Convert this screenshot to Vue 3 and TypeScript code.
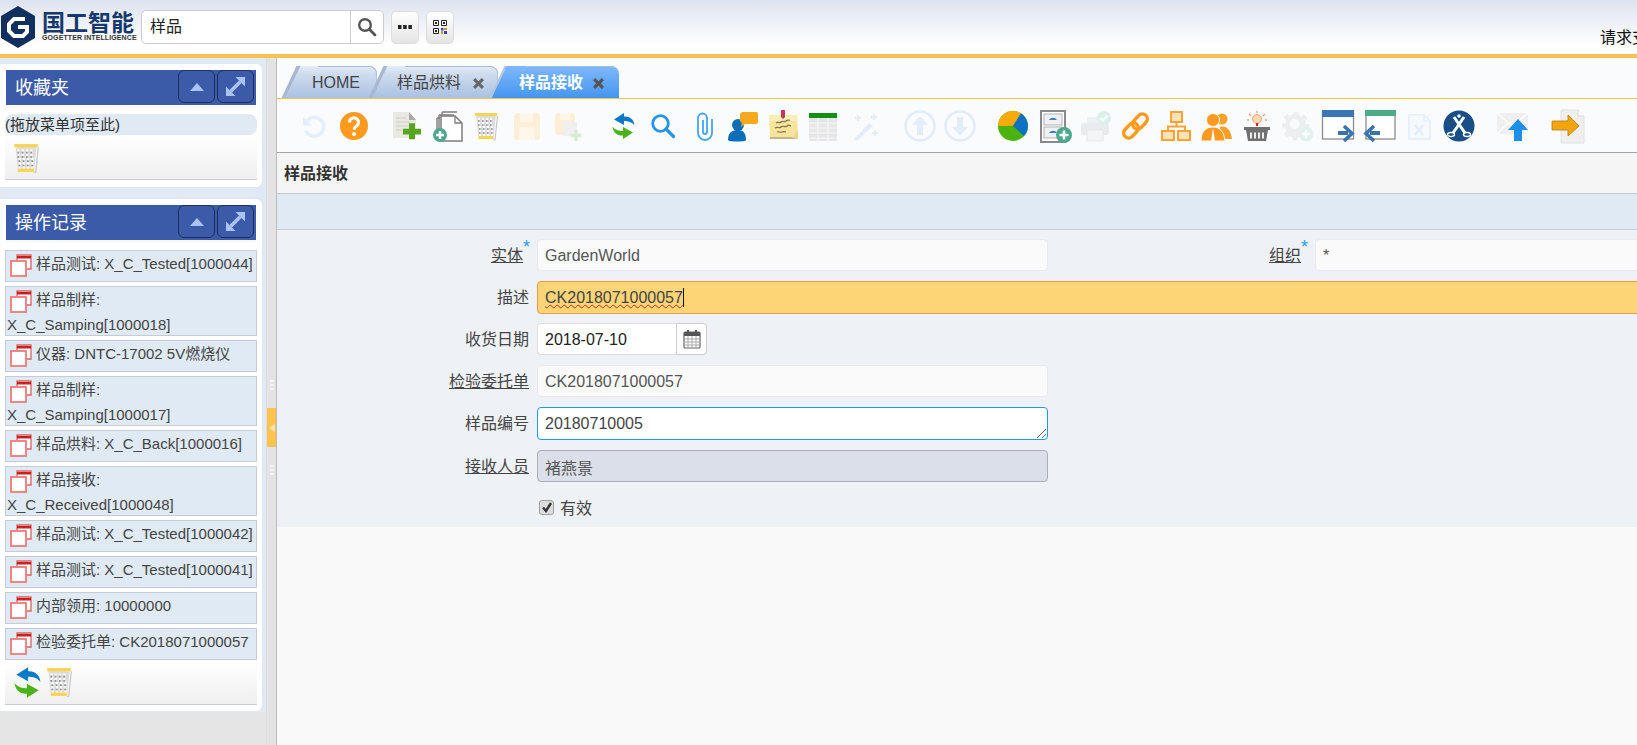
<script setup lang="ts">
const bin = `<path d="M6 4h20l-2.500 24h-15z" fill="#dcdcdc"/><g stroke="#fff" stroke-width="2" stroke-dasharray="2 2"><path d="M8 9h16M8 13h16M9 17h14M9 21h14M9 25h14" /></g><g stroke="#8f8f8f" stroke-width="1.600" stroke-dasharray="1.500 2.500"><path d="M8 11h16M8 15h16M9 19h14M9 23h14"/></g><path d="M5 3h22v3H5z" fill="#f9d44e"/><path d="M8.500 26h15v3h-15z" fill="#f9d44e"/><path d="M27.500 6l-2.500 24H23" fill="none" stroke="#c9c9c9" stroke-width="1.200"/>`;
const refresh = `<path d="M17 3L7 9.500 17 15v-4c4 0 8 1 10.500 4.500C27 9 22 6 17 6.500z" fill="#0a79c6"/><path d="M16 29l10-6.500L16 17v4c-4 0-8-1-10.500-4.500C6 23 11 26 16 25.500z" fill="#4bb31a"/>`;

const icons: { x: number; svg: string }[] = [
  { x: 313, svg: `<path d="M10 10.500a9.500 9.500 0 1 1-1.500 10" fill="none" stroke="#e3f0fc" stroke-width="3.500"/><path d="M6 6.500v9h9z" fill="#e3f0fc"/>` },
  { x: 354, svg: `<circle cx="16" cy="16" r="14" fill="#ff9a1f"/><path d="M11.500 12.500a4.500 4.500 0 1 1 7 3.600c-1.700 1.100-2.500 1.900-2.500 3.600" fill="none" stroke="#fff" stroke-width="3"/><circle cx="16" cy="24" r="2" fill="#fff"/>` },
  { x: 406, svg: `<path d="M3 2h16l7 8v18H3z" fill="#e9e9e2"/><path d="M19 2l7 8h-7z" fill="#a9a9a9"/><path d="M6 8h10M6 12h14M6 16h12M6 20h8" stroke="#cfcfc8" stroke-width="1.200"/><path d="M20 17h6v6h6v6h-6v5h-6v-5h-6v-6h6z" transform="translate(-1 -3) scale(1 .95)" fill="#5aa520"/>` },
  { x: 448, svg: `<path d="M10 2h15M7 5h15M7 5v14M10 2v3" fill="none" stroke="#7d7d7d" stroke-width="1.400"/><path d="M5 8h3M5 8v12" fill="none" stroke="#7d7d7d" stroke-width="1.400"/><path d="M9 6h14l7 7v18H9z" fill="#fff" stroke="#7d7d7d" stroke-width="1.500"/><path d="M23 6v7h7" fill="none" stroke="#7d7d7d" stroke-width="1.300"/><circle cx="8" cy="25" r="7" fill="#4ca88d"/><path d="M8 21v8M4 25h8" stroke="#fff" stroke-width="2.500"/>` },
  { x: 486, svg: bin },
  { x: 527, svg: `<rect x="3" y="3" width="26" height="27" rx="3" fill="#fdeed8"/><rect x="9" y="3" width="13" height="9" fill="#fff7ea"/><rect x="8" y="17" width="16" height="13" fill="#fff7ea"/>` },
  { x: 568, svg: `<rect x="3" y="3" width="20" height="22" rx="3" fill="#fdeed8"/><rect x="8" y="3" width="10" height="7" fill="#fff7ea"/><rect x="11" y="12" width="14" height="14" fill="#f0f0ee"/><path d="M24 20v11M18.500 25.500h11" stroke="#d7ecd0" stroke-width="3.500"/>` },
  { x: 623, svg: refresh },
  { x: 663, svg: `<circle cx="13.500" cy="13.500" r="7.800" fill="none" stroke="#2594ea" stroke-width="2.800"/><path d="M19 19l7.500 7.500" stroke="#2594ea" stroke-width="3.200" stroke-linecap="round"/>` },
  { x: 705, svg: `<path d="M23 9v14a7 7 0 0 1-14 0V8a4.500 4.500 0 0 1 9 0v14a2 2 0 0 1-4 0V10" fill="none" stroke="#45a5f0" stroke-width="1.800"/>` },
  { x: 743, svg: `<circle cx="11" cy="15" r="6" fill="#0a6fb8"/><path d="M1 30c0-8 5-10 10-10s8 3 8 10c0 2-18 2-18 0z" fill="#0a6fb8"/><path d="M15 2h14a2 2 0 0 1 2 2v8a2 2 0 0 1-2 2H18l-4 3 1-4a3 3 0 0 1-2-2V4z" fill="#f5a91c"/>` },
  { x: 783, svg: `<path d="M2 5h28l1 24H3z" fill="#f6e49a"/><path d="M2 5h28l.3 6H2z" fill="#f9edb8"/><path d="M3 27h28v2H3z" fill="#bdb592"/><path d="M31 20l-6 8 6 1z" fill="#e8d68e"/><path d="M9 13c2-2 3 1 5-1s3 1 5-1 3 0 4-1M8 18c3-2 4 1 6-1s4 1 6-1 3 0 4 0M10 22c2-1 3 1 5 0s3 0 4 0" fill="none" stroke="#7e7650" stroke-width="1.200"/><path d="M14 0h4v7l-2 2-2-2z" fill="#c0394e"/>` },
  { x: 823, svg: `<rect x="2" y="3" width="28" height="28" rx="1" fill="#e6e6e6"/><rect x="2" y="3" width="28" height="5" fill="#129014"/><path d="M2 13h28M2 18h28M2 23h28M2 28h28M11 8v23M21 8v23" stroke="#f7f7f7" stroke-width="1"/>` },
  { x: 865, svg: `<path d="M5 29L20 13l4 3L8 31z" fill="#e3eefa"/><path d="M9 5v6M6 8h6M25 4v6M22 7h6M26 20v6M23 23h6" stroke="#e3eefa" stroke-width="2.200"/>` },
  { x: 920, svg: `<circle cx="16" cy="16" r="14.500" fill="none" stroke="#e3edf8" stroke-width="2.600"/><path d="M16 6l8 9h-5v10h-6V15H8z" fill="#e3edf8"/>` },
  { x: 960, svg: `<circle cx="16" cy="16" r="14.500" fill="none" stroke="#e3edf8" stroke-width="2.600"/><path d="M16 26l8-9h-5V7h-6v10H8z" fill="#e3edf8"/>` },
  { x: 1013, svg: `<circle cx="16" cy="16" r="15" fill="#4ab30e"/><path d="M16 16L1 16A15 15 0 0 1 24 3.300z" fill="#f9aa0c"/><path d="M16 16L24 3.300A15 15 0 0 1 27 26z" fill="#0f70c4"/>` },
  { x: 1055, svg: `<rect x="2" y="1" width="24" height="31" fill="#fff" stroke="#8a8a8a" stroke-width="2"/><rect x="5" y="4" width="18" height="11" fill="#eef0f3" stroke="#b4b4b4"/><rect x="5" y="17" width="18" height="11" fill="#eef0f3" stroke="#b4b4b4"/><path d="M10 10c2-3 6-3 8 0zM10 23c2-3 6-3 8 0z" fill="#3a7fc0"/><circle cx="25" cy="25" r="8" fill="#4ca88d"/><path d="M25 20.500v9M20.500 25h9" stroke="#fff" stroke-width="2.600"/>` },
  { x: 1095, svg: `<rect x="8" y="7" width="14" height="7" fill="#eef1f3"/><rect x="2" y="13" width="28" height="12" rx="2" fill="#e8ecef"/><rect x="8" y="20" width="16" height="11" fill="#f3f5f6" stroke="#e5e8ea"/><circle cx="25" cy="8" r="7" fill="#dcefe8"/><path d="M21.500 8l2.500 2.500 4.500-5" fill="none" stroke="#fff" stroke-width="2"/>` },
  { x: 1136, svg: `<g fill="none" stroke="#ff9a1f" stroke-width="3.400"><rect x="15" y="3" width="10" height="17" rx="5" transform="rotate(42 20 11.500)"/><rect x="6" y="12" width="10" height="17" rx="5" transform="rotate(42 11 20.500)"/></g>` },
  { x: 1176, svg: `<g fill="#ffe3b8" stroke="#ffa235" stroke-width="2"><rect x="11" y="2" width="11" height="10"/><rect x="2" y="21" width="12" height="9"/><rect x="18" y="21" width="12" height="9"/></g><path d="M16.500 12v4M8 21v-4.500h17V21" fill="none" stroke="#ffa235" stroke-width="2"/>` },
  { x: 1216, svg: `<circle cx="22" cy="9" r="5.500" fill="#fda127"/><path d="M20 17c6-2 11 3 12 12H22z" fill="#fda127"/><circle cx="13" cy="10" r="6.500" fill="#ff9a1f" stroke="#fafbfd" stroke-width="1"/><path d="M1 31c0-11 6-14 12-14s11 4 12 14z" fill="#ff9a1f" stroke="#fafbfd" stroke-width="1"/><path d="M13 18l-2 13h4z" fill="#fafbfd"/>` },
  { x: 1257, svg: `<path d="M3 17h26v3H3z" fill="#707070"/><path d="M5 20h22l-2 11H7z" fill="#707070"/><path d="M10 22.500v6M14 22.500v6M18 22.500v6M22 22.500v6" stroke="#eee" stroke-width="2"/><circle cx="16" cy="9" r="4.500" fill="#ffd9b0" stroke="#f0a079"/><path d="M15 13h2v3h-2z" fill="#e02020"/><path d="M16 1v2M8 4l2 2M24 4l-2 2M6 10h2M24 10h2" stroke="#f0a079" stroke-width="1.300"/>` },
  { x: 1298, svg: `<path d="M13 1h6v4l4 2 3-3 4 5-3 3 1 4h4v6h-4l-1 4 3 3-5 4-3-3-4 2v4h-6v-4l-4-2-3 3-4-5 3-3-1-4H-1v-6h4l1-4-3-3 4-5 3 3 4-2z" transform="translate(1 1) scale(.82)" fill="#eceeef"/><circle cx="12.700" cy="14" r="5" fill="#fafbfd"/><circle cx="24" cy="24" r="7.500" fill="#e3f1ec"/><path d="M24 20v8M20 24h8" stroke="#fafbfd" stroke-width="2.300"/>` },
  { x: 1338, svg: `<rect x="0.500" y="1" width="31" height="28" fill="#fff" stroke="#8d8d8d" stroke-width="1.300"/><rect y="0" width="32" height="7" fill="#3d76b5"/><path d="M16 23h10" stroke="#3a74ae" stroke-width="4"/><path d="M22 16l8 7.500-8 7.500" fill="none" stroke="#3a74ae" stroke-width="3.600"/>` },
  { x: 1380, svg: `<rect x="2" y="1" width="29" height="28" fill="#fff" stroke="#8d8d8d" stroke-width="1.300"/><rect x="1" y="0" width="31" height="6" fill="#4fab86"/><path d="M6 23h10" stroke="#3a74ae" stroke-width="4"/><path d="M10 16l-8 7.500 8 7.500" fill="none" stroke="#3a74ae" stroke-width="3.600"/>` },
  { x: 1419, svg: `<path d="M6 5h15l6 6v18H6z" fill="#f6fafe" stroke="#e6f1fb" stroke-width="2"/><path d="M21 5v6h6" fill="none" stroke="#e6f1fb" stroke-width="1.500"/><path d="M12 15l8 10M20 15l-8 10" stroke="#dcebf8" stroke-width="2"/>` },
  { x: 1459, svg: `<circle cx="16" cy="16" r="15.500" fill="#1a4f85"/><path d="M11 7l11 16M21 7L10 23" stroke="#fff" stroke-width="3"/><circle cx="16" cy="6" r="1.800" fill="#fff"/><ellipse cx="8" cy="24.500" rx="3.500" ry="2" fill="none" stroke="#fff" stroke-width="1.400"/><ellipse cx="24" cy="24.500" rx="3.500" ry="2" fill="none" stroke="#fff" stroke-width="1.400"/>` },
  { x: 1513, svg: `<rect y="3" width="31" height="21" fill="#efefef"/><path d="M0 3l15.500 13L31 3M0 24l11-11M31 24L20 13" fill="none" stroke="#fff" stroke-width="1.500"/><path d="M21 9l10 11h-6v11h-8V20h-6z" fill="#1d8fe6"/>` },
  { x: 1568, svg: `<path d="M9 0h17l6 6v27H9z" fill="#efefef" stroke="#e2e2e2"/><path d="M26 0v6h6" fill="#fff" stroke="#dcdcdc"/><path d="M0 12h16V6l11 11-11 10v-6H0z" fill="#f3a40f" stroke="#b57d0a" stroke-width=".8" transform="translate(0 -1)"/>` },
];
const toolbar = icons.map((icon, i) => ({
  ...icon,
  gap: i === 0 ? 0 : icon.x - icons[i - 1].x - 32,
}));

const records = [
  '样品测试: X_C_Tested[1000044]',
  '样品制样: X_C_Samping[1000018]',
  '仪器: DNTC-17002 5V燃烧仪',
  '样品制样: X_C_Samping[1000017]',
  '样品烘料: X_C_Back[1000016]',
  '样品接收: X_C_Received[1000048]',
  '样品测试: X_C_Tested[1000042]',
  '样品测试: X_C_Tested[1000041]',
  '内部领用: 10000000',
  '检验委托单: CK2018071000057',
];
</script>

<template>
  <div class="page">
    <header class="topbar">
      <svg class="hex" viewBox="0 0 36 44">
        <path d="M18 1L35 11v22L18 43 1 33V11z" fill="#12305e"/>
        <path d="M25 14H14l-5 5v7l5 5h9l4-4v-5H18" fill="none" stroke="#fff" stroke-width="4"/>
      </svg>
      <div class="brand">
        <div class="brand-cn">国工智能</div>
        <div class="brand-en">GOGETTER INTELLIGENCE</div>
      </div>
      <div class="search">
        <div class="search-text">样品</div>
        <div class="search-btn">
          <svg viewBox="0 0 20 20" width="20" height="20">
            <circle cx="8" cy="8" r="5.800" fill="none" stroke="#555" stroke-width="2.400"/>
            <path d="M12.500 12.500l5.500 5.500" stroke="#555" stroke-width="2.800" stroke-linecap="round"/>
          </svg>
        </div>
      </div>
      <div class="top-btn">
        <svg viewBox="0 0 14 4" width="14" height="4"><path d="M0 0h3.500v4H0zM5.200 0h3.500v4H5.200zM10.400 0h3.500v4h-3.500z" fill="#222"/></svg>
      </div>
      <div class="top-btn">
        <svg viewBox="0 0 14 14" width="14" height="14">
          <path d="M.5.500h5v5h-5zM8.500.500h5v5h-5zM.5 8.500h5v5h-5z" fill="none" stroke="#222"/>
          <path d="M2 2h2v2H2zM10 2h2v2h-2zM2 10h2v2H2z" fill="#222"/>
          <path d="M8 8h2.500v2.500H8zM11 11h3v3h-3z" fill="#3a3ac0"/><path d="M11 8h3v2h-3zM8 11h2v3H8z" fill="#c8a020"/>
        </svg>
      </div>
      <div class="request">请求支</div>
    </header>

    <div class="body">
      <aside class="sidebar">
        <div class="side-inner">
          <section class="panel">
            <div class="panel-head">
              <span class="panel-title">收藏夹</span>
              <span class="head-btn"><svg viewBox="0 0 16 10" width="16" height="10"><path d="M8 1l7 8H1z" fill="#a9c3f2"/></svg></span>
              <span class="head-btn"><svg viewBox="0 0 22 22" width="21" height="21"><path d="M11 1h10v10zM1 11v10h10z" fill="#a9c3f2"/><path d="M16 6L6 16" stroke="#a9c3f2" stroke-width="4"/></svg></span>
            </div>
            <div class="drop">(拖放菜单项至此)</div>
            <div class="panel-foot">
              <svg class="foot-icon" viewBox="4 2 24 28" v-html="bin"></svg>
            </div>
          </section>

          <section class="panel panel-log">
            <div class="panel-head">
              <span class="panel-title">操作记录</span>
              <span class="head-btn"><svg viewBox="0 0 16 10" width="16" height="10"><path d="M8 1l7 8H1z" fill="#a9c3f2"/></svg></span>
              <span class="head-btn"><svg viewBox="0 0 22 22" width="21" height="21"><path d="M11 1h10v10zM1 11v10h10z" fill="#a9c3f2"/><path d="M16 6L6 16" stroke="#a9c3f2" stroke-width="4"/></svg></span>
            </div>
            <div class="records">
              <div v-for="r in records" :key="r" class="record">
                <svg class="rec-icon" viewBox="0 -3 22 28">
                  <path d="M7 6.500V1h14v14h-5" fill="#fff" stroke="#e06060" stroke-width="1.300"/>
                  <path d="M7 2h14v2.500H7z" fill="#c82020"/>
                  <rect x="1" y="7" width="15" height="15" fill="#fff" stroke="#ee7a7a" stroke-width="1.800"/>
                </svg>{{ r }}
              </div>
            </div>
            <div class="panel-foot foot-log">
              <svg class="foot-refresh" viewBox="5 2 23 28" v-html="refresh"></svg>
              <svg class="foot-icon foot-bin" viewBox="4 2 24 28" v-html="bin"></svg>
            </div>
          </section>
        </div>
      </aside>

      <div class="splitter">
        <span class="grip"></span>
        <span class="handle">
          <svg viewBox="0 0 6 8" width="6" height="8"><path d="M6 0v8L0 4z" fill="#f3e3c4"/></svg>
        </span>
        <span class="grip"></span>
      </div>

      <main class="content">
        <nav class="tabs">
          <div class="tab tab-home">HOME</div>
          <div class="tab tab-two">
            样品烘料
            <svg class="close" viewBox="0 0 10 10"><path d="M1 1l8 8M9 1l-8 8" stroke="#666" stroke-width="2.800"/></svg>
          </div>
          <div class="tab tab-active">
            样品接收
            <svg class="close" viewBox="0 0 10 10"><path d="M1 1l8 8M9 1l-8 8" stroke="#555" stroke-width="2.800"/></svg>
          </div>
        </nav>

        <div class="toolbar">
          <svg
            v-for="t in toolbar"
            :key="t.x"
            class="tool"
            viewBox="0 0 32 32"
            :style="{ marginLeft: t.gap + 'px' }"
            v-html="t.svg"
          ></svg>
        </div>

        <div class="title">样品接收</div>
        <div class="band"></div>

        <form class="form" @submit.prevent>
          <div class="label"><span class="link">实体</span><sup class="star">*</sup></div>
          <div class="field readonly">GardenWorld</div>
          <div class="label"><span class="link">组织</span><sup class="star">*</sup></div>
          <div class="field readonly">*</div>

          <div class="label">描述</div>
          <div class="field focused wide"><span class="squiggle">CK2018071000057</span><span class="caret"></span></div>

          <div class="label">收货日期</div>
          <div class="date">
            <div class="field date-input">2018-07-10</div>
            <div class="date-btn">
              <svg viewBox="0 0 18 20" width="18" height="20">
                <rect x="1" y="3" width="16" height="16" rx="1" fill="#fff" stroke="#666" stroke-width="1.200"/>
                <rect x="1" y="3" width="16" height="4" fill="#555"/>
                <path d="M5 1v4M13 1v4" stroke="#555" stroke-width="2"/>
                <path d="M1 10h16M1 13h16M1 16h16M5 7v12M9 7v12M13 7v12" stroke="#999" stroke-width=".8"/>
              </svg>
            </div>
          </div>

          <div class="label"><span class="link">检验委托单</span></div>
          <div class="field readonly">CK2018071000057</div>

          <div class="label">样品编号</div>
          <div class="field active">
            20180710005
            <svg class="grab" viewBox="0 0 9 9" width="9" height="9"><path d="M0 9l9-9M5 9l4-4" stroke="#555" stroke-width=".9"/></svg>
          </div>

          <div class="label label-down"><span class="link">接收人员</span></div>
          <div class="field disabled">褚燕景</div>

          <div class="check-row">
            <span class="check">
              <svg viewBox="0 0 12 12" width="12" height="12"><path d="M2 6.500l3 3.500 5-8" fill="none" stroke="#333" stroke-width="2.400"/></svg>
            </span>
            <span class="check-label">有效</span>
          </div>
        </form>
        <div class="rest"></div>
      </main>
    </div>
  </div>
</template>

<style>
html,
body {
  margin: 0;
  overflow: hidden;
}
</style>

<style scoped>
.page {
  width: 1637px;
  height: 745px;
  display: flex;
  flex-direction: column;
  overflow: hidden;
  font-family: "Liberation Sans", "Noto Sans CJK SC", sans-serif;
  font-size: 16px;
  color: #333;
  background: #fff;
}
.topbar {
  flex: none;
  height: 54px;
  border-bottom: 4px solid #fac24e;
  background: linear-gradient(#dde3ee, #fff 85%);
  display: flex;
  align-items: center;
  position: relative;
}
.hex {
  flex: none;
  width: 36px;
  height: 44px;
}
.brand {
  flex: none;
  width: 92px;
  margin-left: 6px;
  margin-right: 7px;
}
.brand-cn {
  font-size: 23px;
  line-height: 22px;
  font-weight: 700;
  color: #15396f;
  white-space: nowrap;
}
.brand-en {
  font-size: 7px;
  line-height: 8px;
  font-weight: 700;
  letter-spacing: 0.1px;
  color: #333;
  white-space: nowrap;
}
.search {
  flex: none;
  width: 241px;
  height: 32px;
  display: flex;
  background: #fff;
  border: 1px solid #ccc;
  border-radius: 5px;
}
.search-text {
  flex: 1;
  padding-left: 8px;
  line-height: 32px;
  color: #222;
}
.search-btn {
  width: 32px;
  border-left: 1px solid #ccc;
  display: flex;
  align-items: center;
  justify-content: center;
}
.top-btn {
  flex: none;
  width: 26px;
  height: 31px;
  margin-left: 7px;
  border: 1px solid #ddd;
  border-radius: 5px;
  background: linear-gradient(#fff, #e4e4e4);
  display: flex;
  align-items: center;
  justify-content: center;
}
.request {
  position: absolute;
  left: 1600px;
  top: 28px;
  line-height: 20px;
  white-space: nowrap;
  color: #111;
}
.body {
  flex: 1;
  display: flex;
  min-height: 0;
}
.sidebar {
  flex: none;
  width: 266px;
  background: #e5e5e5;
}
.side-inner {
  background: #dfeaf4;
  padding: 5px 3px 0 0;
  height: 654px;
  box-sizing: border-box;
  display: flex;
  flex-direction: column;
  gap: 10px;
}
.panel {
  background: #fff;
  border: 1px solid #e2e7ee;
  border-left: 0;
  border-radius: 0 7px 7px 0;
  padding: 6px 5px 7px;
  box-sizing: border-box;
  height: 125px;
}
.panel-log {
  height: 514px;
}
.panel-head {
  margin-left: 1px;
  margin-right: 1px;
  height: 35px;
  background: #3b5aa8;
  display: flex;
  align-items: flex-start;
  color: #fff;
  box-shadow: 0 3px 0 #fafafa;
}
.panel-title {
  flex: 1;
  font-size: 18px;
  line-height: 37px;
  padding-left: 9px;
}
.head-btn {
  width: 35px;
  height: 31px;
  margin-right: 2px;
  border: 1px solid #1c2f60;
  border-radius: 6px;
  display: flex;
  align-items: center;
  justify-content: center;
}
.drop {
  margin-top: 9px;
  height: 21px;
  line-height: 21px;
  background: #dfeaf4;
  border-radius: 8px;
  font-size: 15px;
  color: #333;
}
.panel-foot {
  height: 45px;
  box-sizing: border-box;
  background: linear-gradient(#fff, #efefef);
  border-bottom: 1px solid #ccc;
  display: flex;
  align-items: flex-start;
  padding: 8px 0 0 8px;
}
.foot-log {
  padding-top: 6px;
  padding-left: 9px;
}
.foot-icon {
  width: 26px;
  height: 30px;
  flex: none;
}
.foot-refresh {
  width: 27px;
  height: 33px;
  flex: none;
}
.foot-bin {
  margin-left: 5px;
  margin-top: 1px;
}
.records {
  margin-top: 10px;
  display: flex;
  flex-direction: column;
  gap: 4px;
}
.record {
  background: #dfeaf4;
  border: 1px solid #c5ccd5;
  line-height: 20px;
  min-height: 30px;
  font-size: 15px;
  color: #444;
  padding-left: 1px;
}
.rec-icon {
  display: inline-block;
  width: 22px;
  height: 28px;
  vertical-align: middle;
  margin: 0 4px 0 3px;
}
.splitter {
  flex: none;
  width: 9px;
  background: #e3e3e3;
  border-right: 1px solid #bbb;
  border-left: 1px solid #ddd;
  display: flex;
  flex-direction: column;
  align-items: center;
  justify-content: center;
  gap: 18px;
  padding-top: 52px;
}
.grip {
  width: 4px;
  height: 10px;
  border-left: 2px dotted #f4f4f4;
  border-right: 2px dotted #f4f4f4;
  box-sizing: border-box;
}
.handle {
  width: 9px;
  height: 39px;
  background: #fdc34d;
  display: flex;
  align-items: center;
  justify-content: center;
}
.content {
  flex: 1;
  min-width: 0;
  display: flex;
  flex-direction: column;
  background: #f9f9f9;
  overflow: hidden;
}
.tabs {
  flex: none;
  height: 41px;
  box-sizing: border-box;
  padding: 8px 0 0 20px;
  background: #fafbfd;
  border-bottom: 1px solid #fbc24a;
  display: flex;
  align-items: stretch;
}
.tab {
  position: relative;
  height: 32px;
  line-height: 34px;
  white-space: nowrap;
  border-radius: 0 8px 0 0;
  background: linear-gradient(#e4edf8, #cfdcee 25%, #a9c1e2);
  box-shadow: inset 0 1px 0 #a9bcd6, inset -1px 0 0 #b5c6dd;
  color: #444;
  box-sizing: border-box;
}
.tab::before {
  content: "";
  position: absolute;
  left: -8px;
  top: 0;
  bottom: 0;
  width: 22px;
  transform: skewX(-25deg);
  background: linear-gradient(#e4edf8, #cfdcee 25%, #a9c1e2);
  border-left: 4px solid #a7b8d1;
  box-sizing: border-box;
  z-index: -1;
}
.tab-home {
  width: 80px;
  padding-left: 15px;
  isolation: isolate;
}
.tab-two {
  width: 114px;
  padding-left: 13px;
  margin-left: 7px;
  isolation: isolate;
}
.tab-active {
  width: 114px;
  padding-left: 14px;
  margin-left: 7px;
  font-weight: 700;
  color: #fff;
  background: linear-gradient(#7fb8fc, #4596ee);
  box-shadow: inset 0 1px 0 #9cc4ee;
  isolation: isolate;
}
.tab-active::before {
  background: linear-gradient(#7fb8fc, #4596ee);
  border-left: 2px solid #b3c4dd;
}
.close {
  position: absolute;
  right: 15px;
  top: 12px;
  width: 11px;
  height: 11px;
}
.tab-two .close {
  right: 14px;
}
.toolbar {
  flex: none;
  height: 54px;
  box-sizing: border-box;
  padding: 11px 0 0 20px;
  background: #fafbfd;
  border-bottom: 1px solid #a3a3a3;
  display: flex;
  align-items: flex-start;
}
.tool {
  flex: none;
  width: 32px;
  height: 32px;
  overflow: visible;
}
.title {
  flex: none;
  height: 41px;
  box-sizing: border-box;
  background: #f5f5f5;
  border-bottom: 1px solid #c3c9d0;
  padding-left: 7px;
  line-height: 41px;
  font-weight: 700;
  color: #333;
}
.band {
  flex: none;
  height: 36px;
  box-sizing: border-box;
  background: #dfeaf4;
  border-bottom: 1px solid #c6ced6;
}
.form {
  flex: none;
  height: 297px;
  box-sizing: border-box;
  padding-top: 9px;
  background: #eef1f6;
  display: grid;
  grid-template-columns: 252px 511px 251px 330px;
  grid-auto-rows: 32px;
  column-gap: 8px;
  row-gap: 10px;
}
.label {
  grid-column: 1;
  text-align: right;
  line-height: 34px;
  color: #444;
  white-space: nowrap;
}
.label:nth-child(3) {
  grid-column: 3;
  grid-row: 1;
}
.label-down {
  padding-top: 1px;
}
.link {
  text-decoration: underline;
}
.star {
  color: #2f9bf0;
  font-size: 18px;
  line-height: 0;
  vertical-align: 8px;
  margin-right: -1px;
}
.field {
  box-sizing: border-box;
  height: 32px;
  padding-left: 7px;
  line-height: 32px;
  border-radius: 4px;
  border: 1px solid transparent;
  color: #555;
  white-space: nowrap;
}
.readonly {
  background: #fafafa;
  border-color: #e8eaef;
}
.wide {
  grid-column: 2 / 5;
}
.focused {
  background: #fed576;
  border-color: #ee9b44;
  height: 33px;
  color: #444;
}
.squiggle {
  text-decoration: underline wavy #e02020 1px;
  text-underline-offset: 1px;
}
.caret {
  display: inline-block;
  width: 1px;
  height: 19px;
  background: #111;
  vertical-align: -4px;
}
.date {
  display: flex;
  width: 170px;
}
.date-input {
  flex: 1;
  background: #fff;
  border-color: #ddd;
  border-right: 0;
  border-radius: 4px 0 0 4px;
  color: #222;
}
.date-btn {
  flex: none;
  width: 31px;
  box-sizing: border-box;
  height: 32px;
  border: 1px solid #ccc;
  border-radius: 0 4px 4px 0;
  background: #fdfdfd;
  display: flex;
  align-items: center;
  justify-content: center;
}
.active {
  position: relative;
  height: 33px;
  background: #fff;
  border-color: #2196f3;
  color: #444;
}
.grab {
  position: absolute;
  right: 1px;
  bottom: 1px;
}
.disabled {
  margin-top: 1px;
  background: #dadfea;
  border-color: #a9adb6;
  line-height: 35px;
  color: #555;
}
.check-row {
  grid-column: 2;
  display: flex;
  align-items: center;
  gap: 6px;
  padding-left: 2px;
  height: 32px;
}
.check {
  flex: none;
  width: 15px;
  height: 15px;
  box-sizing: border-box;
  border: 1px solid #a0a0a0;
  border-radius: 3px;
  background: #dcdcdc;
  display: flex;
  align-items: center;
  justify-content: center;
}
.check-label {
  color: #444;
}
.rest {
  flex: 1;
}
</style>
